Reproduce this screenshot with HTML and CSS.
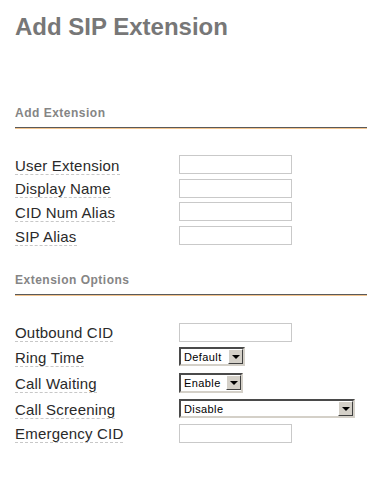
FILE: index.html
```html
<!DOCTYPE html>
<html>
<head>
<meta charset="utf-8">
<title>Add SIP Extension</title>
<link rel="stylesheet" href="styles.css">
</head>
<body>
<div class="page">
  <h1 class="title">Add SIP Extension</h1>

  <h2 class="section">Add Extension</h2>
  <div class="form form-a">
    <label class="lbl">User Extension</label><input class="txt" type="text">
    <label class="lbl">Display Name</label><input class="txt" type="text">
    <label class="lbl">CID Num Alias</label><input class="txt" type="text">
    <label class="lbl">SIP Alias</label><input class="txt" type="text">
  </div>

  <h2 class="section section-2">Extension Options</h2>
  <div class="form form-b">
    <label class="lbl">Outbound CID</label><input class="txt" type="text">
    <label class="lbl">Ring Time</label>
    <span class="sel sel-ring"><select><option>Default</option></select><span class="arrow"></span></span>
    <label class="lbl">Call Waiting</label>
    <span class="sel sel-wait"><select><option>Enable</option></select><span class="arrow"></span></span>
    <label class="lbl">Call Screening</label>
    <span class="sel sel-screen"><select><option>Disable</option></select><span class="arrow"></span></span>
    <label class="lbl">Emergency CID</label><input class="txt" type="text">
  </div>
</div>
</body>
</html>
```
FILE: styles.css
```css
html, body {
  margin: 0;
  padding: 0;
  background: #fff;
}
.page {
  padding: 13px 17px 0 15px;
  font-family: "Liberation Sans", Arial, sans-serif;
}
.title {
  margin: 0;
  font-size: 24px;
  line-height: 27px;
  font-weight: bold;
  color: #777;
}
.section {
  margin: 67px 0 0 0;
  padding-bottom: 7px;
  font-size: 12px;
  line-height: 13px;
  font-weight: bold;
  color: #858585;
  border-bottom: 1px solid #5a5a5a;
  box-shadow: 0 1px 0 #f3c48e;
  letter-spacing: 0.5px;
}
.section-2 {
  margin-top: 27px;
}
.form {
  display: grid;
  grid-template-columns: 164px 1fr;
  align-items: center;
  margin-top: 25px;
}
.form-a {
  grid-auto-rows: 23.6px;
}
.form-b {
  grid-template-rows: 24px 25px 27px 25px 24px;
}
.lbl {
  justify-self: start;
  font-size: 15px;
  line-height: 17px;
  color: #2a2a2a;
  letter-spacing: 0.2px;
  border-bottom: 1px dashed #c8c8c8;
  padding-top: 2px;
}
.txt {
  box-sizing: border-box;
  width: 113px;
  height: 19px;
  margin: 0;
  padding: 0 2px;
  border: 1px solid #c9c9c9;
  background: #fff;
}
.sel {
  box-sizing: border-box;
  display: inline-flex;
  align-items: center;
  height: 19px;
  border: 2px solid;
  border-color: #4a4a4a #d4d0c8 #d4d0c8 #4a4a4a;
  background: #fff;
  justify-self: start;
}
.sel-ring { width: 66px; }
.sel-wait { width: 64px; height: 20px; }
.sel-screen { width: 176px; }
.sel select {
  appearance: none;
  -webkit-appearance: none;
  flex: 1;
  min-width: 0;
  height: 100%;
  border: none;
  margin: 0;
  padding: 0 0 0 3px;
  background: #fff;
  font-family: "Liberation Sans", Arial, sans-serif;
  font-size: 11px;
  color: #000;
  letter-spacing: 0.4px;
  outline: none;
}
.arrow {
  box-sizing: border-box;
  flex: none;
  width: 15px;
  height: 15px;
  background: #d4d0c8;
  border: 1px solid;
  border-color: #fff #404040 #404040 #fff;
  display: flex;
  align-items: center;
  justify-content: center;
}
.arrow::after {
  content: "";
  width: 0;
  height: 0;
  border-left: 4px solid transparent;
  border-right: 4px solid transparent;
  border-top: 4px solid #000;
  margin-top: 1px;
}
```
